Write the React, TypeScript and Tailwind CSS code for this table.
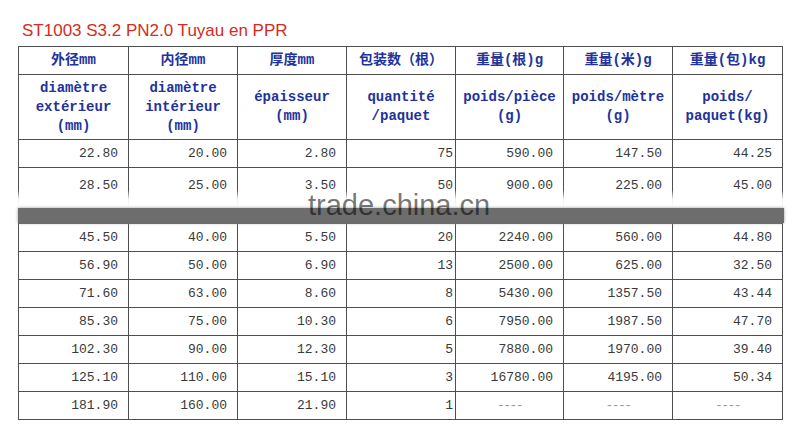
const mono = { fontFamily: '"Liberation Mono", "Noto Sans CJK SC", monospace' }

const heads = ['外径mm', '内径mm', '厚度mm', '包装数（根）', '重量(根)g', '重量(米)g', '重量(包)kg']

const subHeads = [
  ['diamètre', 'extérieur', '(mm)'],
  ['diamètre', 'intérieur', '(mm)'],
  ['épaisseur', '(mm)'],
  ['quantité', '/paquet'],
  ['poids/pièce', '(g)'],
  ['poids/mètre', '(g)'],
  ['poids/', 'paquet(kg)'],
]

const topRows = [
  ['22.80', '20.00', '2.80', '75', '590.00', '147.50', '44.25'],
  ['28.50', '25.00', '3.50', '50', '900.00', '225.00', '45.00'],
]

const bottomRows = [
  ['45.50', '40.00', '5.50', '20', '2240.00', '560.00', '44.80'],
  ['56.90', '50.00', '6.90', '13', '2500.00', '625.00', '32.50'],
  ['71.60', '63.00', '8.60', '8', '5430.00', '1357.50', '43.44'],
  ['85.30', '75.00', '10.30', '6', '7950.00', '1987.50', '47.70'],
  ['102.30', '90.00', '12.30', '5', '7880.00', '1970.00', '39.40'],
  ['125.10', '110.00', '15.10', '3', '16780.00', '4195.00', '50.34'],
  ['181.90', '160.00', '21.90', '1', '----', '----', '----'],
]

const Cols = () => (
  <colgroup>
    <col className="w-[110px]" />
    <col className="w-[109px]" />
    <col className="w-[109px]" />
    <col className="w-[109px]" />
    <col className="w-[108px]" />
    <col className="w-[109px]" />
    <col className="w-[110px]" />
  </colgroup>
)

const DataCell = ({ value, i, tall }: { value: string; i: number; tall?: boolean }) => {
  const dash = value === '----'
  return (
    <td
      className={
        'border-x border-[#4f4f4f] text-[13px] leading-none ' +
        (tall ? 'h-[40px] align-top pt-[11px] ' : 'h-[28px] align-middle border-y ') +
        (dash
          ? 'text-center text-[#9a9a9a] tracking-[-1.5px] '
          : i === 3
            ? 'text-right pr-[2px] text-[#3a3a3a] '
            : 'text-right pr-[10px] text-[#3a3a3a] ')
      }
    >
      {value}
    </td>
  )
}

const App = () => {
  return (
    <div className="w-[800px] h-[435px] bg-white overflow-hidden pl-[18px] pt-[21px]" style={mono}>
      <div
        className="h-[25px] pl-[4px] text-[17px] leading-[20px] text-[#d42b22]"
        style={{ fontFamily: '"Liberation Sans", Arial, sans-serif' }}
      >
        ST1003 S3.2 PN2.0 Tuyau en PPR
      </div>

      <div className="relative w-[765px]">
        <table className="table-fixed border-collapse w-[765px]">
          <Cols />
          <tbody>
            <tr>
              {heads.map((h) => (
                <td key={h} className="h-[28px] border border-[#4f4f4f] text-center text-[14px] font-bold text-[#22329c]">
                  {h}
                </td>
              ))}
            </tr>
            <tr>
              {subHeads.map((lines, i) => (
                <td key={i} className="h-[65px] border border-[#4f4f4f] text-center text-[14px] leading-[19px] font-bold text-[#22329c]">
                  {lines.map((l) => (
                    <div key={l}>{l}</div>
                  ))}
                </td>
              ))}
            </tr>
            <tr>
              {topRows[0].map((v, i) => (
                <DataCell key={i} value={v} i={i} />
              ))}
            </tr>
            <tr>
              {topRows[1].map((v, i) => (
                <DataCell key={i} value={v} i={i} tall />
              ))}
            </tr>
          </tbody>
        </table>
        {/* torn edge of the stitched picture */}
        <div className="absolute left-[-4px] right-[-6px] bottom-0 h-[18px] bg-gradient-to-b from-white/0 via-white/90 to-white" />
      </div>

      <div className="relative w-[766px] h-[15px] bg-[#6d6d6d] shadow-[0_0_3px_#9a9a9a]">
        <div
          className="absolute left-[290px] top-[-17px] text-[29px] leading-none text-black/55 whitespace-nowrap"
          style={{ fontFamily: '"Liberation Sans", Arial, sans-serif' }}
        >
          trade.china.cn
        </div>
      </div>

      <table className="table-fixed border-collapse w-[765px]">
        <Cols />
        <tbody>
          {bottomRows.map((row, r) => (
            <tr key={r}>
              {row.map((v, i) => (
                <DataCell key={i} value={v} i={i} />
              ))}
            </tr>
          ))}
        </tbody>
      </table>
    </div>
  )
}

export default App
